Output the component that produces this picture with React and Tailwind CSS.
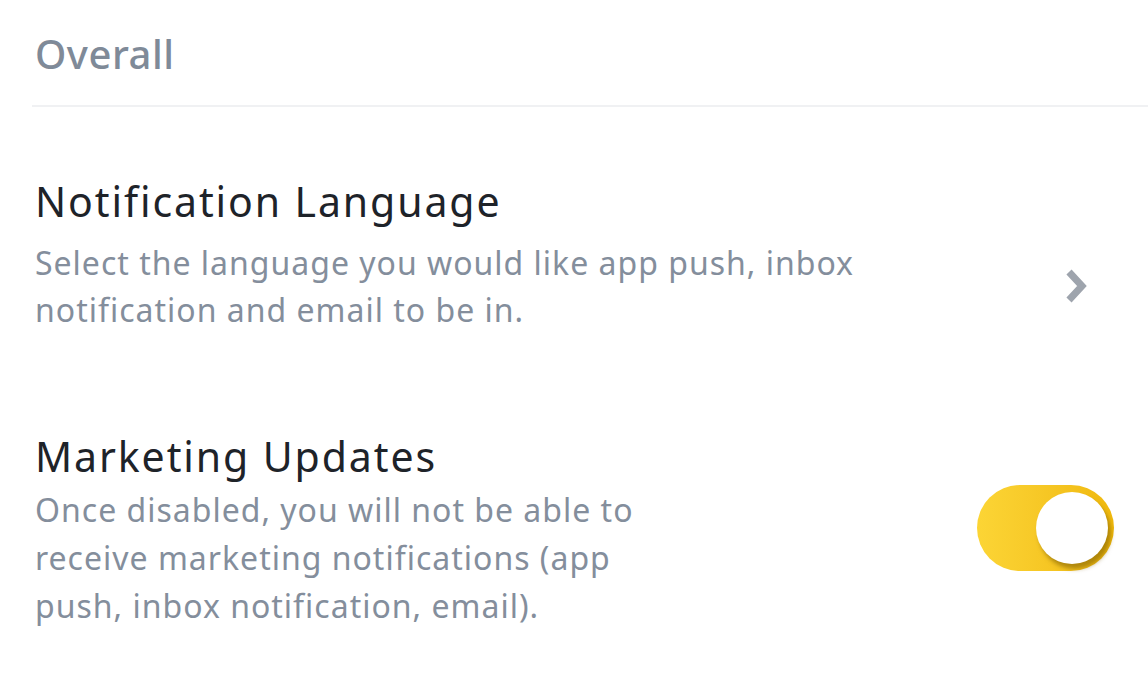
export default function App() {
  return (
    <div
      className="w-[1148px] h-[689px] bg-white overflow-hidden"
      style={{ fontFamily: '"Noto Sans", "Open Sans", sans-serif' }}
    >
      {/* Section header */}
      <div className="h-[105px] pl-[35px] pt-[26px]">
        <h2 className="text-[40px] leading-[56px] font-medium tracking-[0.5px] text-[#7f8a98]">Overall</h2>
      </div>
      <div className="ml-[32px] h-[2px] bg-[#f0f1f3]" />

      {/* Notification Language */}
      <div className="flex pl-[35px] pr-[58px] pt-[64px]">
        <div className="flex-1">
          <div className="text-[41px] leading-[60px] tracking-[1.9px] text-[#1e2329]">Notification Language</div>
          <div className="mt-[8px] flex items-center justify-between">
            <p className="text-[32px] leading-[47px] tracking-[1px] text-[#848e9c]">
              Select the language you would like app push, inbox
              <br />
              notification and email to be in.
            </p>
            <svg width="26" height="36" viewBox="0 0 26 36" fill="none">
              <path d="M5 4L18 18L5 32" stroke="#9ea4ad" strokeWidth="7" strokeLinejoin="miter" />
            </svg>
          </div>
        </div>
      </div>

      {/* Marketing Updates */}
      <div className="flex items-center justify-between pl-[35px] pr-[34px] pt-[93px]">
        <div>
          <div className="text-[41px] leading-[60px] tracking-[1.9px] text-[#1e2329]">Marketing Updates</div>
          <p className="text-[32px] leading-[48px] tracking-[1px] text-[#848e9c]">
            Once disabled, you will not be able to
            <br />
            receive marketing notifications (app
            <br />
            push, inbox notification, email).
          </p>
        </div>
        <button className="flex h-[86px] w-[137px] items-center justify-end rounded-full bg-gradient-to-r from-[#fcd535] to-[#f0b90b] pr-[6px]">
          <span className="block h-[72px] w-[72px] rounded-full bg-white shadow-[3px_5px_4px_rgba(120,90,0,0.55)]" />
        </button>
      </div>
    </div>
  );
}
